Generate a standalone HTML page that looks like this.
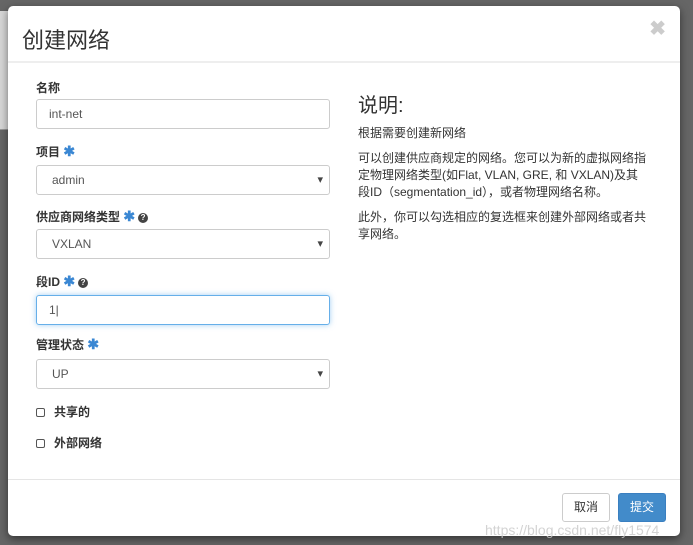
<!DOCTYPE html>
<html><head><meta charset="utf-8"><style>
*{box-sizing:border-box}
body{margin:0;width:693px;height:545px;background:#666;font-family:"Liberation Sans","Noto Sans CJK SC",sans-serif;position:relative;overflow:hidden;color:#333}
.bgtop{position:absolute;left:0;top:11px;width:10px;height:119px;background:#d8d8d8;border-bottom:1px solid #999}
.modal{position:absolute;left:8px;top:6px;width:672px;height:530px;background:#fff;border-radius:5px;box-shadow:0 3px 9px rgba(0,0,0,.5)}
.hdr{height:57px;border-bottom:2px solid #eee;position:relative}
.hdr h1{margin:0;position:absolute;left:14px;top:17px;font-size:22px;font-weight:normal;color:#333}
.close{position:absolute;right:14px;top:10px;font-size:20px;font-weight:bold;color:#ccc}
.lbl{position:absolute;left:28px;font-size:12px;font-weight:bold;color:#333}
.star{color:#3a87d3;font-size:14px}
.q{display:inline-block;width:10px;height:10px;border-radius:50%;background:#444;color:#fff;font-size:8px;text-align:center;line-height:10px;vertical-align:1px;margin-left:3px}
.inp{position:absolute;left:28px;width:294px;height:30px;border:1px solid #ccc;border-radius:3px;font-size:12px;color:#555;padding:7px 12px}
.sel{padding-left:15px}
.sel:after{content:"▾";position:absolute;right:6px;top:7px;font-size:11px;color:#444}
.focus{border-color:#66afe9;box-shadow:0 0 6px rgba(102,175,233,.6)}
.cb{position:absolute;left:28px;font-size:12px;font-weight:bold}
.cb i{display:inline-block;width:9px;height:9px;border:1px solid #555;border-radius:2px;margin-right:9px;vertical-align:-1px}
.right{position:absolute;left:350px;top:88px;width:292px;font-size:12px;color:#333;line-height:17px}
.right h3{margin:0 0 7px;font-size:20px;font-weight:normal;line-height:24px}
.right p{margin:0 0 8px}
.foot{position:absolute;left:0;top:473px;width:672px;border-top:1px solid #e5e5e5}
.btn{position:absolute;top:487px;width:48px;height:29px;border-radius:3px;font-size:12px;text-align:center;line-height:27px}
.wm{position:absolute;left:485px;top:522px;font-size:14px;color:rgba(200,200,200,.8)}
</style></head><body>
<div class="bgtop"></div>
<div class="modal">
<div class="hdr"><h1>创建网络</h1><span class="close">✖</span></div>
<div class="lbl" style="top:73px">名称</div>
<div class="inp" style="top:93px">int-net</div>
<div class="lbl" style="top:137px">项目 <span class="star">✱</span></div>
<div class="inp sel" style="top:159px">admin</div>
<div class="lbl" style="top:202px">供应商网络类型 <span class="star">✱</span><span class="q">?</span></div>
<div class="inp sel" style="top:223px">VXLAN</div>
<div class="lbl" style="top:267px">段ID <span class="star">✱</span><span class="q">?</span></div>
<div class="inp focus" style="top:289px">1|</div>
<div class="lbl" style="top:330px">管理状态 <span class="star">✱</span></div>
<div class="inp sel" style="top:353px">UP</div>
<div class="cb" style="top:397px"><i></i>共享的</div>
<div class="cb" style="top:428px"><i></i>外部网络</div>
<div class="right"><h3>说明:</h3>
<p>根据需要创建新网络</p>
<p>可以创建供应商规定的网络。您可以为新的虚拟网络指定物理网络类型(如Flat, VLAN, GRE, 和 VXLAN)及其段ID（segmentation_id），或者物理网络名称。</p>
<p>此外，你可以勾选相应的复选框来创建外部网络或者共享网络。</p></div>
<div class="foot"></div>
<div class="btn" style="left:554px;border:1px solid #ccc;background:#fff;color:#333">取消</div>
<div class="btn" style="left:610px;background:#428bca;border:1px solid #3a7fc0;color:#fff">提交</div>
</div>
<div class="wm">https://blog.csdn.net/fly1574</div>
</body></html>
